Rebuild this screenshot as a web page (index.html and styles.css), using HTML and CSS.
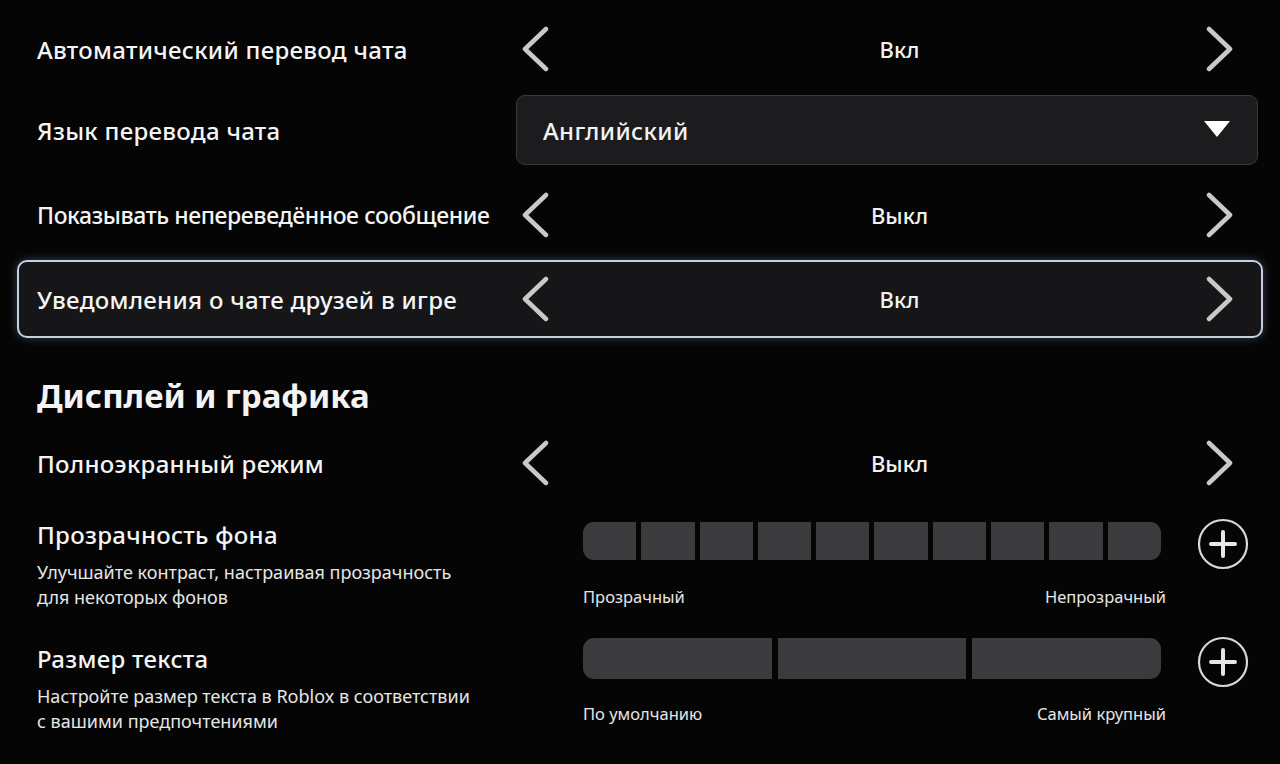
FILE: index.html
```html
<!DOCTYPE html>
<html lang="ru">
<head>
<meta charset="utf-8">
<link rel="stylesheet" href="styles.css">
</head>
<body>
<div class="page">
  <div class="row r1">
    <div class="label">Автоматический перевод чата</div>
    <div class="control stepper">
      <svg class="chev" viewBox="0 0 30 46"><path d="M26 3 L5 23 L26 43"/></svg>
      <div class="value">Вкл</div>
      <svg class="chev" viewBox="0 0 30 46"><path d="M4 3 L25 23 L4 43"/></svg>
    </div>
  </div>
  <div class="row r2">
    <div class="label">Язык перевода чата</div>
    <div class="control">
      <div class="dropdown">
        <span>Английский</span>
        <svg class="tri" viewBox="0 0 26 18"><path d="M0 0 H26 L13 16 Z"/></svg>
      </div>
    </div>
  </div>
  <div class="row r3">
    <div class="label long">Показывать непереведённое сообщение</div>
    <div class="control stepper">
      <svg class="chev" viewBox="0 0 30 46"><path d="M26 3 L5 23 L26 43"/></svg>
      <div class="value">Выкл</div>
      <svg class="chev" viewBox="0 0 30 46"><path d="M4 3 L25 23 L4 43"/></svg>
    </div>
  </div>
  <div class="row focused">
    <div class="label">Уведомления о чате друзей в игре</div>
    <div class="control stepper">
      <svg class="chev" viewBox="0 0 30 46"><path d="M26 3 L5 23 L26 43"/></svg>
      <div class="value">Вкл</div>
      <svg class="chev" viewBox="0 0 30 46"><path d="M4 3 L25 23 L4 43"/></svg>
    </div>
  </div>

  <h2 class="heading">Дисплей и графика</h2>

  <div class="row">
    <div class="label">Полноэкранный режим</div>
    <div class="control stepper">
      <svg class="chev" viewBox="0 0 30 46"><path d="M26 3 L5 23 L26 43"/></svg>
      <div class="value">Выкл</div>
      <svg class="chev" viewBox="0 0 30 46"><path d="M4 3 L25 23 L4 43"/></svg>
    </div>
  </div>

  <div class="section s1">
    <div class="text">
      <div class="label">Прозрачность фона</div>
      <div class="desc">Улучшайте контраст, настраивая прозрачность<br>для некоторых фонов</div>
    </div>
    <div class="slider-wrap">
      <div class="slider-line">
        <div class="slider ten">
          <div class="seg"></div><div class="seg"></div><div class="seg"></div><div class="seg"></div><div class="seg"></div>
          <div class="seg"></div><div class="seg"></div><div class="seg"></div><div class="seg"></div><div class="seg"></div>
        </div>
        <svg class="plus" viewBox="0 0 52 52"><circle cx="26" cy="26" r="24"/><path d="M26 14 V38 M14 26 H38"/></svg>
      </div>
      <div class="ends"><span>Прозрачный</span><span>Непрозрачный</span></div>
    </div>
  </div>

  <div class="section s2">
    <div class="text">
      <div class="label">Размер текста</div>
      <div class="desc">Настройте размер текста в Roblox в соответствии<br>с вашими предпочтениями</div>
    </div>
    <div class="slider-wrap">
      <div class="slider-line">
        <div class="slider three">
          <div class="seg"></div><div class="seg"></div><div class="seg"></div>
        </div>
        <svg class="plus" viewBox="0 0 52 52"><circle cx="26" cy="26" r="24"/><path d="M26 14 V38 M14 26 H38"/></svg>
      </div>
      <div class="ends"><span>По умолчанию</span><span>Самый крупный</span></div>
    </div>
  </div>
</div>
</body>
</html>
```

FILE: styles.css
```css
html, body {
  margin: 0;
  padding: 0;
  background: #050505;
  height: 764px;
  overflow: hidden;
}
body {
  font-family: "Noto Sans", "Open Sans", sans-serif;
  color: #f2f2f2;
}
.page {
  width: 1246px;
  padding: 10px 0 0 17px;
  display: flex;
  flex-direction: column;
}
.row {
  height: 78px;
  margin-bottom: 6px;
  display: flex;
  align-items: center;
  padding: 0 3px 0 18px;
  box-sizing: border-box;
  border: 2px solid transparent;
  border-radius: 10px;
}
.row.r1 { margin-bottom: 3px; }
.row.r2 { margin-bottom: 7px; }
.row.focused {
  background: #161618;
  border-color: #c5cfe0;
  box-shadow: 0 0 10px rgba(150, 175, 230, 0.35);
}
.label {
  width: 481px;
  flex: none;
  font-size: 24px;
  font-weight: 500;
  letter-spacing: 0.3px;
  white-space: nowrap;
  color: #f4f4f4;
}
.label.long {
  font-size: 23px;
  letter-spacing: -0.4px;
}
.control {
  flex: 1;
  display: flex;
  align-items: center;
}
.stepper {
  padding-right: 23px;
}
.chev {
  width: 30px;
  height: 46px;
  flex: none;
  margin-left: 2px;
}
.chev path {
  fill: none;
  stroke: #c9c9c9;
  stroke-width: 4.5;
  stroke-linecap: round;
  stroke-linejoin: round;
}
.value {
  flex: 1;
  text-align: center;
  font-size: 22px;
  font-weight: 500;
  padding-left: 46px;
}
.dropdown {
  flex: 1;
  height: 70px;
  box-sizing: border-box;
  background: #1c1c1e;
  border: 1.5px solid #3a3a3c;
  border-radius: 9px;
  display: flex;
  align-items: center;
  justify-content: space-between;
  padding: 0 27px 0 26px;
  font-size: 24px;
  letter-spacing: 0.4px;
  font-weight: 500;
  margin-left: -2px;
}
.tri {
  width: 26px;
  height: 18px;
}
.tri path { fill: #ffffff; }
.heading {
  margin: 32px 0 8px 20px;
  height: 40px;
  line-height: 40px;
  font-size: 33px;
  font-weight: 700;
  color: #f4f4f4;
}
.section {
  display: flex;
  padding-left: 20px;
}
.section.s1 { margin-top: 12px; }
.section.s2 { margin-top: 34px; }
.section .label {
  line-height: 30px;
  width: 546px;
}
.desc {
  margin-top: 10px;
  font-size: 18px;
  line-height: 25px;
  color: #e6e6e6;
}
.slider-wrap {
  display: flex;
  flex-direction: column;
}
.s1 .slider-wrap { margin-top: 2px; }
.s2 .slider-wrap { margin-top: -6px; }
.slider-line {
  display: flex;
  align-items: center;
}
.slider {
  width: 578px;
  display: flex;
  border-radius: 11px;
  overflow: hidden;
}
.s1 .slider { height: 38px; gap: 5px; }
.s2 .slider { height: 41px; gap: 6px; }
.seg {
  flex: 1;
  background: #3b3b3d;
}
.plus {
  width: 52px;
  height: 52px;
  margin: -7px 0 -13px 36px;
}
.plus circle {
  fill: none;
  stroke: #d8d8d8;
  stroke-width: 2.2;
}
.plus path {
  stroke: #e6e6e6;
  stroke-width: 4;
  stroke-linecap: round;
}
.ends {
  width: 583px;
  display: flex;
  justify-content: space-between;
  font-size: 16.5px;
  line-height: 22px;
  color: #e6e6e6;
}
.s1 .ends { margin-top: 26px; }
.s2 .ends { margin-top: 24px; }
```
